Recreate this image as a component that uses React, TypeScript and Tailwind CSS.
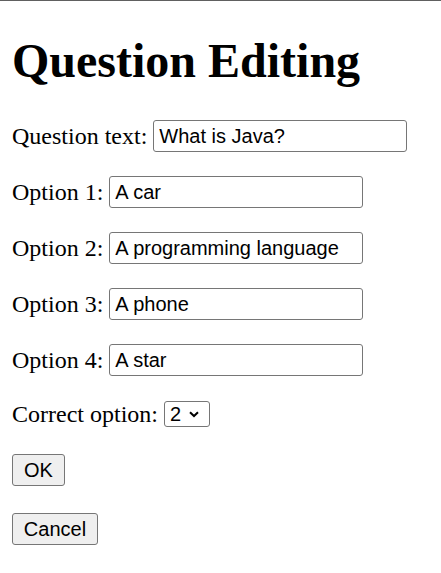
const serif = "font-['Liberation_Serif','Times_New_Roman',serif]";
const sans = "font-['Liberation_Sans',Arial,sans-serif]";

const fields = [
  { label: "Question text:", value: "What is Java?" },
  { label: "Option 1:", value: "A car" },
  { label: "Option 2:", value: "A programming language" },
  { label: "Option 3:", value: "A phone" },
  { label: "Option 4:", value: "A star" },
];

const Field = ({ label, value }: { label: string; value: string }) => {
  return (
    <div className="flex h-8 items-center gap-[6px]">
      <span>{label}</span>
      <input
        readOnly
        value={value}
        className={`${sans} block h-8 w-[254px] rounded-[3px] border border-[#767676] bg-white pl-[5px] text-[20px] text-black outline-none`}
      />
    </div>
  );
};

const Button = ({ children, w }: { children: string; w: string }) => {
  return (
    <button
      className={`${sans} ${w} block h-8 rounded-[3px] border border-[#767676] bg-[#efefef] text-[20px] leading-[30px] text-black`}
    >
      {children}
    </button>
  );
};

export default function App() {
  return (
    <div className={`${serif} min-h-[573px] bg-white text-[24px] text-black`}>
      <div className="h-px bg-[#606060]" />
      <div className="flex flex-col items-start px-3">
        <h1 className="mt-8 text-[48px] font-bold leading-[55px]">Question Editing</h1>
        <div className="mt-8 flex flex-col gap-6">
          {fields.map((f) => (
            <Field key={f.label} label={f.label} value={f.value} />
          ))}
        </div>
        <div className="mt-6 flex h-7 items-center gap-[6px]">
          <span>Correct option:</span>
          <div className="relative h-[26px] w-[46px]">
            <select
              defaultValue="2"
              className={`${sans} block h-[26px] w-[46px] appearance-none rounded-[3px] border border-[#767676] bg-white pl-[5px] text-[20px] leading-[24px] text-black outline-none`}
            >
              <option value="1">1</option>
              <option value="2">2</option>
              <option value="3">3</option>
              <option value="4">4</option>
            </select>
            <svg
              className="pointer-events-none absolute right-[11px] top-[10px]"
              width="10"
              height="7"
              viewBox="0 0 10 7"
            >
              <path d="M1 1.2 L5 5 L9 1.2" fill="none" stroke="#000" strokeWidth="2" />
            </svg>
          </div>
        </div>
        <div className="mt-[26px]">
          <Button w="w-[53px]">OK</Button>
        </div>
        <div className="mt-[27px]">
          <Button w="w-[86px]">Cancel</Button>
        </div>
      </div>
    </div>
  );
}
